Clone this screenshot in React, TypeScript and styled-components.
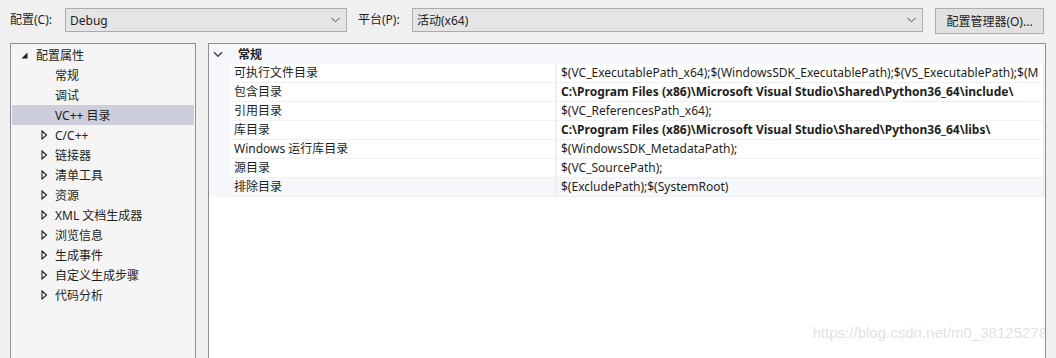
import styled, { createGlobalStyle } from "styled-components";

const GlobalStyle = createGlobalStyle`
  html, body {
    margin: 0;
    padding: 0;
    background: #f0f0f0;
    overflow: hidden;
  }
  body {
    font-family: "Noto Sans", "Noto Sans CJK SC", sans-serif;
    font-size: 12px;
    color: #1e1e1e;
  }
`;

const Page = styled.div`
  width: 1056px;
  height: 358px;
  display: flex;
  flex-direction: column;
  overflow: hidden;
`;

const Toolbar = styled.div`
  height: 43px;
  display: flex;
  align-items: flex-start;
  padding: 8px 12px 0 10px;
  box-sizing: border-box;
`;

const Label = styled.span<{ $width: number }>`
  width: ${({ $width }) => $width}px;
  flex-shrink: 0;
  line-height: 24px;
  white-space: nowrap;
`;

const Combo = styled.div<{ $width: number }>`
  width: ${({ $width }) => $width}px;
  height: 24px;
  box-sizing: border-box;
  border: 1px solid #acacac;
  background: #e5e5e5;
  display: flex;
  align-items: center;
  justify-content: space-between;
  padding: 0 6px 0 4px;
  margin-right: 11px;
`;

const Chevron = styled.svg`
  width: 9px;
  height: 6px;
  flex-shrink: 0;
`;

const Button = styled.div`
  width: 109px;
  height: 26px;
  box-sizing: border-box;
  border: 1px solid #adadad;
  background: #e1e1e1;
  display: flex;
  align-items: center;
  justify-content: center;
  margin-left: 1px;
`;

const Body = styled.div`
  flex: 1;
  display: flex;
  gap: 12px;
  padding: 0 10px 0 10px;
`;

const TreePanel = styled.div`
  width: 186px;
  flex-shrink: 0;
  box-sizing: border-box;
  border: 1px solid #8f8f8f;
  border-bottom: none;
  background: #f5f5f5;
  padding-top: 1px;
`;

const TreeRow = styled.div<{ $active?: boolean; $indent: number }>`
  height: 20px;
  display: flex;
  align-items: center;
  margin: 0 1px;
  padding-left: ${({ $indent }) => $indent}px;
  background: ${({ $active }) => ($active ? "#cccedb" : "transparent")};
  white-space: nowrap;
`;

const Toggle = styled.span<{ $width: number }>`
  width: ${({ $width }) => $width}px;
  flex-shrink: 0;
  display: inline-flex;
  align-items: center;
`;

const PropPanel = styled.div`
  flex: 1;
  box-sizing: border-box;
  border: 1px solid #8f8f8f;
  border-bottom: none;
  background: #ffffff;
  position: relative;
  overflow: hidden;
`;

const GroupRow = styled.div`
  height: 20px;
  display: flex;
  align-items: center;
  background: #f5f7fa;
  font-weight: bold;
  padding-left: 4px;
`;

const PropRow = styled.div<{ $tint?: boolean }>`
  height: 19px;
  display: grid;
  grid-template-columns: 21px 327px 1fr;
  background: #f5f7fa;
  ${({ $tint }) => ($tint ? "& > span { background: #f5f7fa; }" : "")}
`;

const Cell = styled.span<{ $bold?: boolean }>`
  background: #ffffff;
  border-bottom: 1px solid #f0f0f0;
  border-right: 2px solid #f0f0f0;
  padding-left: 4px;
  line-height: 18px;
  white-space: nowrap;
  overflow: hidden;
  font-weight: ${({ $bold }) => ($bold ? "bold" : "normal")};
`;

const Gutter = styled.span``;

const Watermark = styled.div`
  position: absolute;
  right: -2px;
  top: 280px;
  font-family: "Liberation Sans", Arial, sans-serif;
  font-size: 15px;
  color: #e2e2e2;
  white-space: nowrap;
`;

const DownChevron = () => (
  <Chevron viewBox="0 0 9 6">
    <path d="M0.5 0.8 L4.5 4.8 L8.5 0.8" fill="none" stroke="#505050" strokeWidth="1" />
  </Chevron>
);

const treeItems = [
  "C/C++",
  "链接器",
  "清单工具",
  "资源",
  "XML 文档生成器",
  "浏览信息",
  "生成事件",
  "自定义生成步骤",
  "代码分析",
];

const props: { name: string; value: string; bold?: boolean }[] = [
  { name: "可执行文件目录", value: "$(VC_ExecutablePath_x64);$(WindowsSDK_ExecutablePath);$(VS_ExecutablePath);$(M" },
  { name: "包含目录", value: "C:\\Program Files (x86)\\Microsoft Visual Studio\\Shared\\Python36_64\\include\\", bold: true },
  { name: "引用目录", value: "$(VC_ReferencesPath_x64);" },
  { name: "库目录", value: "C:\\Program Files (x86)\\Microsoft Visual Studio\\Shared\\Python36_64\\libs\\", bold: true },
  { name: "Windows 运行库目录", value: "$(WindowsSDK_MetadataPath);" },
  { name: "源目录", value: "$(VC_SourcePath);" },
  { name: "排除目录", value: "$(ExcludePath);$(SystemRoot)" },
];

export default function App() {
  return (
    <Page>
      <GlobalStyle />
      <Toolbar>
        <Label $width={55}>配置(C):</Label>
        <Combo $width={282}>
          <span>Debug</span>
          <DownChevron />
        </Combo>
        <Label $width={54}>平台(P):</Label>
        <Combo $width={511}>
          <span>活动(x64)</span>
          <DownChevron />
        </Combo>
        <Button>配置管理器(O)...</Button>
      </Toolbar>
      <Body>
        <TreePanel>
          <TreeRow $indent={9}>
            <Toggle $width={15}>
              <svg width="7" height="7" viewBox="0 0 7 7">
                <path d="M6.5 0.5 L6.5 6.5 L0.5 6.5 Z" fill="#1e1e1e" />
              </svg>
            </Toggle>
            配置属性
          </TreeRow>
          <TreeRow $indent={43}>常规</TreeRow>
          <TreeRow $indent={43}>调试</TreeRow>
          <TreeRow $indent={43} $active>
            VC++ 目录
          </TreeRow>
          {treeItems.map((item) => (
            <TreeRow key={item} $indent={29}>
              <Toggle $width={14}>
                <svg width="7" height="10" viewBox="0 0 7 10">
                  <path d="M1 1 L5.5 5 L1 9 Z" fill="none" stroke="#1e1e1e" strokeWidth="1.1" />
                </svg>
              </Toggle>
              {item}
            </TreeRow>
          ))}
        </TreePanel>
        <PropPanel>
          <GroupRow>
            <Toggle $width={25}>
              <svg width="10" height="7" viewBox="0 0 10 7">
                <path d="M1 1.2 L5 5.2 L9 1.2" fill="none" stroke="#4a4a4a" strokeWidth="1.6" />
              </svg>
            </Toggle>
            常规
          </GroupRow>
          {props.map((p, i) => (
            <PropRow key={p.name} $tint={i === props.length - 1}>
              <Gutter />
              <Cell>{p.name}</Cell>
              <Cell $bold={p.bold}>{p.value}</Cell>
            </PropRow>
          ))}
          <Watermark>https://blog.csdn.net/m0_38125278</Watermark>
        </PropPanel>
      </Body>
    </Page>
  );
}
